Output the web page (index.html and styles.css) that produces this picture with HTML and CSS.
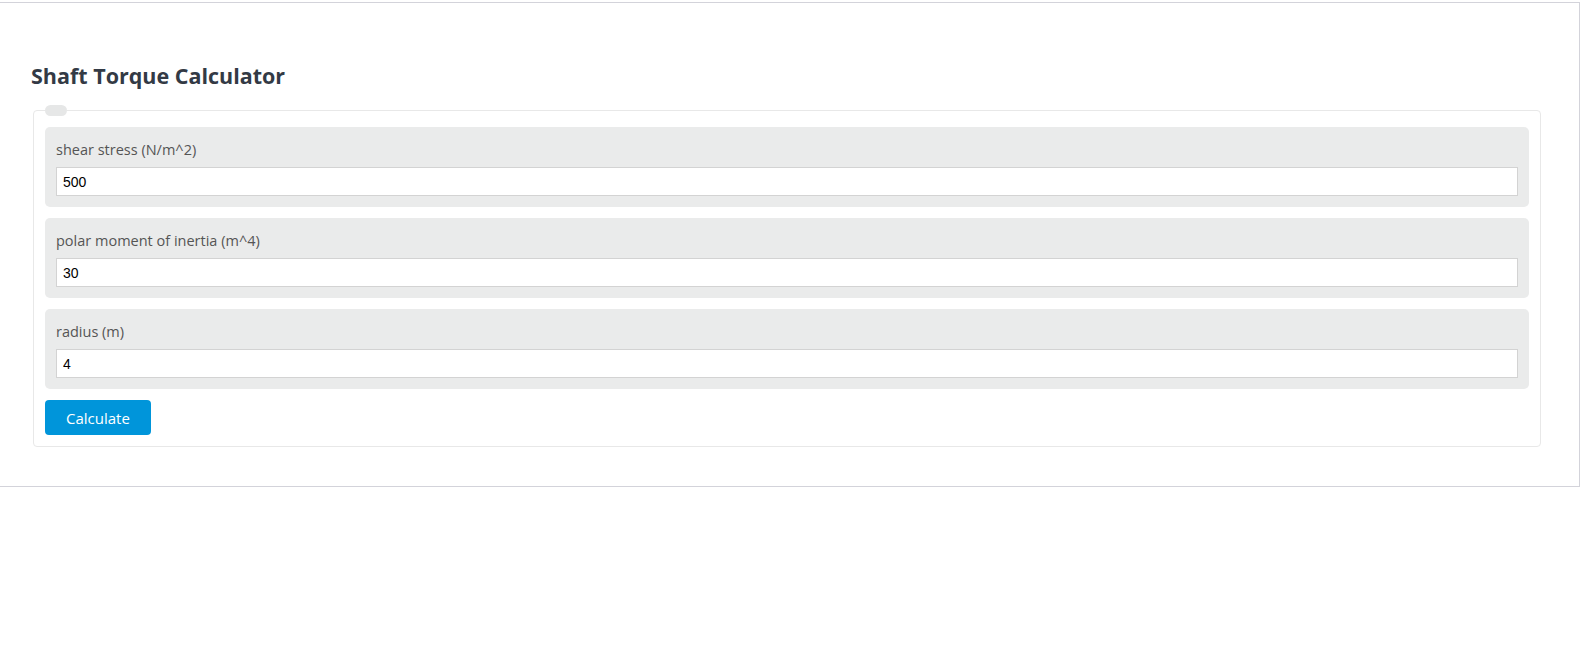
FILE: index.html
```html
<!DOCTYPE html>
<html lang="en">

<head>
    <meta charset="UTF-8" />
    <meta name="viewport" content="width=device-width, initial-scale=1.0" />
    <title>Shaft Torque Calculator</title>
    <link rel="stylesheet" href="styles.css">
</head>

<body>

    <div class="page">
        <h2 class="calc-title">Shaft Torque Calculator</h2>

        <fieldset class="calc-box">
            <legend></legend>

            <div class="field">
                <label for="stress">shear stress (N/m^2)</label>
                <input type="text" id="stress" value="500" />
            </div>

            <div class="field">
                <label for="inertia">polar moment of inertia (m^4)</label>
                <input type="text" id="inertia" value="30" />
            </div>

            <div class="field">
                <label for="radius">radius (m)</label>
                <input type="text" id="radius" value="4" />
            </div>

            <button class="calc-button">Calculate</button>
        </fieldset>
    </div>

</body>

</html>
```

FILE: styles.css
```css
* {
    box-sizing: border-box;
}

body {
    margin: 0;
    font-family: "Open Sans", "Noto Sans", sans-serif;
    background: white;
}

.page {
    width: 1580px;
    margin-top: 2px;
    border: 1px solid #d3d3da;
    border-left: none;
    padding: 59px 38px 39px 33px;
}

.calc-title {
    margin: 0 0 15px -2px;
    font-size: 21.5px;
    line-height: 28px;
    font-weight: 700;
    color: #333a45;
}

.calc-box {
    margin: 0;
    border: 1px solid #e8e8e8;
    border-radius: 4px;
    padding: 11px;
}

.calc-box legend {
    width: 22px;
    height: 11px;
    padding: 0;
    background: #e6e7e7;
    border-radius: 6px;
}

.field {
    background: #eaebeb;
    border-radius: 5px;
    padding: 12px 11px 11px;
    margin-bottom: 11px;
}

.field label {
    display: block;
    font-size: 14.5px;
    line-height: 21px;
    color: #555;
    margin-bottom: 7px;
}

.field input {
    display: block;
    width: 100%;
    height: 29px;
    padding: 0 6px;
    border: 1px solid #d3d3d3;
    font-family: "Liberation Sans", Arial, sans-serif;
    font-size: 14px;
    color: black;
    background: white;
}

.calc-button {
    height: 35px;
    padding: 0 21px;
    border: none;
    border-radius: 4px;
    background: #0095da;
    color: white;
    font-family: "Open Sans", "Noto Sans", sans-serif;
    font-size: 15px;
    cursor: pointer;
}
```
